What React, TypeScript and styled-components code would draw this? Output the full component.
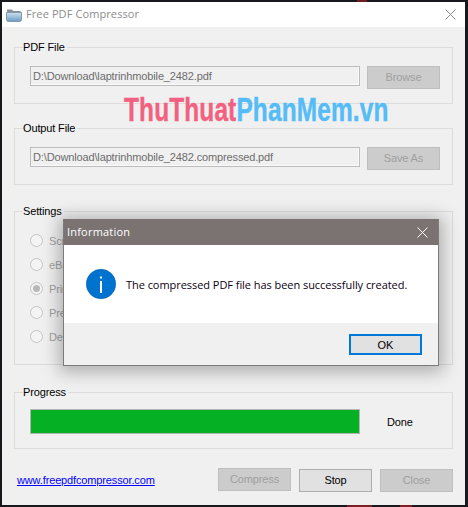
import React from "react";
import styled, { createGlobalStyle } from "styled-components";

const Global = createGlobalStyle`
  html, body { margin: 0; padding: 0; width: 468px; height: 507px; overflow: hidden; background: #17181c; }
  #root { width: 468px; height: 507px; overflow: hidden; }
  * { box-sizing: border-box; }
`;

const Desktop = styled.div`
  width: 468px;
  height: 507px;
  padding: 2px 3px 2px 2px;
  background:
    linear-gradient(90deg, transparent 347px, #7a1f22 347px, #7a1f22 372px, transparent 372px, transparent 400px, #7a1f22 400px, #7a1f22 412px, transparent 412px) bottom / 100% 2px no-repeat,
    linear-gradient(90deg, transparent 357px, #6d1c20 357px, #6d1c20 367px, transparent 367px) top / 100% 2px no-repeat,
    #17181c;
`;

const Window = styled.div`
  position: relative;
  width: 463px;
  height: 503px;
  display: flex;
  flex-direction: column;
  background: #f0f0f0;
  font-family: "Liberation Sans", Arial, sans-serif;
  font-size: 11px;
  letter-spacing: -0.14px;
  color: #000;
`;

const TitleBar = styled.div`
  height: 25px;
  flex: none;
  display: flex;
  align-items: center;
  background: #fff;
  padding: 0 9px 0 4px;
`;

const TitleText = styled.div`
  margin: 0 0 2px 4px;
  flex: 1;
  font-family: "Open Sans", sans-serif;
  font-size: 11px;
  letter-spacing: 0.1px;
  color: #8c8c8c;
`;

const Content = styled.div`
  flex: 1;
  display: flex;
  flex-direction: column;
  padding: 13px 12px 0;
`;

const Group = styled.fieldset<{ $height: number; $top?: number }>`
  margin: ${(p) => p.$top ?? 0}px 0 0;
  padding: 0 0 0 15px;
  height: ${(p) => p.$height}px;
  border: 1px solid #dcdcdc;
  min-inline-size: 0;
`;

const Legend = styled.legend`
  margin-left: -7px;
  padding: 0 2px 0 0;
  height: 14px;
  line-height: 14px;
  font-size: 11px;
`;

const FieldRow = styled.div`
  display: flex;
  gap: 7px;
  margin-top: 12px;
`;

const PathBox = styled.div`
  width: 330px;
  height: 20px;
  padding-left: 2px;
  line-height: 18px;
  border: 1px solid #bcbcbc;
  box-shadow: inset -1px -1px 0 #fafafa;
  color: #6d6d6d;
  white-space: nowrap;
  overflow: hidden;
`;

const Button = styled.button<{ $disabled?: boolean; $drop?: number }>`
  width: 73px;
  height: 23px;
  flex: none;
  margin: ${(p) => p.$drop ?? 0}px 0 0;
  padding: 0 0 1px 0;
  font-family: "Liberation Sans", Arial, sans-serif;
  font-size: 11px;
  letter-spacing: -0.14px;
  border: 1px solid ${(p) => (p.$disabled ? "#bfbfbf" : "#adadad")};
  background: ${(p) => (p.$disabled ? "#cccccc" : "#e1e1e1")};
  color: ${(p) => (p.$disabled ? "#9f9f9f" : "#000")};
`;

const RadioList = styled.div`
  display: flex;
  flex-direction: column;
  gap: 11px;
  margin-top: 16px;
`;

const RadioRow = styled.div`
  display: flex;
  align-items: center;
  gap: 6px;
  height: 13px;
  color: #a0a0a0;
`;

const RadioCircle = styled.span<{ $checked?: boolean }>`
  width: 13px;
  height: 13px;
  flex: none;
  display: flex;
  align-items: center;
  justify-content: center;
  border-radius: 50%;
  border: 1px solid #c4c4c4;
  background: #f4f4f4;
  &::after {
    content: "";
    display: ${(p) => (p.$checked ? "block" : "none")};
    width: 7px;
    height: 7px;
    border-radius: 50%;
    background: #b8b8b8;
  }
`;

const ProgressRow = styled.div`
  display: flex;
  align-items: center;
  gap: 27px;
  margin-top: 10px;
`;

const ProgressTrack = styled.div`
  width: 330px;
  height: 25px;
  border: 1px solid #b4b4b4;
  background: #e6e6e6;
`;

const ProgressFill = styled.div`
  height: 100%;
  background: #06b025;
`;

const Footer = styled.div`
  display: flex;
  align-items: flex-start;
  gap: 8px;
  margin-top: 19px;
  padding-left: 3px;
`;

const SiteLink = styled.a`
  flex: 1;
  margin-top: 5px;
  color: #0000ff;
  text-decoration: underline;
  font-size: 11px;
  line-height: 14px;
`;

const Watermark = styled.div`
  position: absolute;
  left: 122px;
  top: 89px;
  font-family: "Liberation Sans", Arial, sans-serif;
  font-weight: 700;
  font-size: 33px;
  line-height: 38px;
  letter-spacing: 0.2px;
  white-space: nowrap;
  transform: scaleX(0.74);
  transform-origin: left top;
  -webkit-text-stroke: 0.4px currentColor;
`;

const Pink = styled.span`
  color: #f2617f;
`;

const Blue = styled.span`
  color: #55bcf7;
`;

const Dialog = styled.div`
  position: absolute;
  left: 61px;
  top: 217px;
  width: 376px;
  height: 147px;
  display: flex;
  flex-direction: column;
  border: 1px solid #7b7b7b;
  border-top: 0;
  background: #fff;
  box-shadow: 0 2px 16px 4px rgba(0, 0, 0, 0.28);
  font-family: "Open Sans", sans-serif;
  letter-spacing: normal;
`;

const DialogTitle = styled.div`
  height: 26px;
  flex: none;
  display: flex;
  align-items: center;
  padding: 0 10px 0 3px;
  background: #7a7372;
  color: #fff;
  font-size: 11px;
  letter-spacing: 0.2px;
`;

const DialogTitleText = styled.span`
  flex: 1;
  margin-bottom: 2px;
`;

const DialogBody = styled.div`
  height: 78px;
  flex: none;
  display: flex;
  align-items: center;
  gap: 10px;
  padding: 0 0 0 22px;
`;

const Message = styled.div`
  font-size: 11px;
  letter-spacing: -0.05px;
  color: #0c0014;
  white-space: nowrap;
`;

const DialogFooter = styled.div`
  flex: 1;
  display: flex;
  justify-content: flex-end;
  align-items: flex-start;
  padding: 11px 16px 0 0;
  background: #f0f0f0;
`;

const OkButton = styled.button`
  width: 73px;
  height: 21px;
  padding: 0;
  border: 2px solid #0078d7;
  background: #e1e1e1;
  font-family: "Liberation Sans", Arial, sans-serif;
  font-size: 11px;
  color: #000;
`;

const FolderIcon = () => (
  <svg width="16" height="14" viewBox="0 0 16 14">
    <defs>
      <linearGradient id="folderFace" x1="0" y1="0" x2="0" y2="1">
        <stop offset="0" stopColor="#cfe0ee" />
        <stop offset="1" stopColor="#6b9cc4" />
      </linearGradient>
    </defs>
    <path d="M1 3V1.5h5L7 3h7.5v2H1z" fill="#8a8f96" />
    <path d="M.5 4.5h15v7a2 2 0 0 1-2 2h-11a2 2 0 0 1-2-2z" fill="url(#folderFace)" stroke="#7e99b0" />
  </svg>
);

const CloseIcon = ({ color }: { color: string }) => (
  <svg width="11" height="11" viewBox="0 0 11 11">
    <path d="M.5.5l10 10M10.5.5l-10 10" stroke={color} strokeWidth="1" fill="none" />
  </svg>
);

const InfoIcon = () => (
  <svg width="30" height="30" viewBox="0 0 30 30">
    <circle cx="15" cy="15" r="14.7" fill="#0073d1" stroke="#0a5ea6" strokeWidth="0.6" />
    <rect x="14" y="12" width="2" height="12" fill="#fff" />
    <rect x="14" y="7.5" width="2" height="2" fill="#fff" />
  </svg>
);

const radios = [
  { label: "Screen" },
  { label: "eBook" },
  { label: "Printer", checked: true },
  { label: "Prepress" },
  { label: "Default" },
];

export default function App() {
  return (
    <>
      <Global />
      <Desktop>
        <Window>
          <TitleBar>
            <FolderIcon />
            <TitleText>Free PDF Compressor</TitleText>
            <CloseIcon color="#8a8a8a" />
          </TitleBar>
          <Content>
            <Group $height={64}>
              <Legend>PDF File</Legend>
              <FieldRow>
                <PathBox>D:\Download\laptrinhmobile_2482.pdf</PathBox>
                <Button $disabled>Browse</Button>
              </FieldRow>
            </Group>
            <Group $height={64} $top={17}>
              <Legend>Output File</Legend>
              <FieldRow>
                <PathBox>D:\Download\laptrinhmobile_2482.compressed.pdf</PathBox>
                <Button $disabled>Save As</Button>
              </FieldRow>
            </Group>
            <Group $height={161} $top={19}>
              <Legend>Settings</Legend>
              <RadioList>
                {radios.map((r) => (
                  <RadioRow key={r.label}>
                    <RadioCircle $checked={r.checked} />
                    {r.label}
                  </RadioRow>
                ))}
              </RadioList>
            </Group>
            <Group $height={64} $top={20}>
              <Legend>Progress</Legend>
              <ProgressRow>
                <ProgressTrack>
                  <ProgressFill style={{ width: "100%" }} />
                </ProgressTrack>
                Done
              </ProgressRow>
            </Group>
            <Footer>
              <SiteLink href="#">www.freepdfcompressor.com</SiteLink>
              <Button $disabled>Compress</Button>
              <Button $drop={1}>Stop</Button>
              <Button $disabled $drop={1}>Close</Button>
            </Footer>
          </Content>
          <Watermark>
            <Pink>ThuThuat</Pink>
            <Blue>PhanMem.vn</Blue>
          </Watermark>
          <Dialog>
            <DialogTitle>
              <DialogTitleText>Information</DialogTitleText>
              <CloseIcon color="#ffffff" />
            </DialogTitle>
            <DialogBody>
              <InfoIcon />
              <Message>The compressed PDF file has been successfully created.</Message>
            </DialogBody>
            <DialogFooter>
              <OkButton>OK</OkButton>
            </DialogFooter>
          </Dialog>
        </Window>
      </Desktop>
    </>
  );
}
